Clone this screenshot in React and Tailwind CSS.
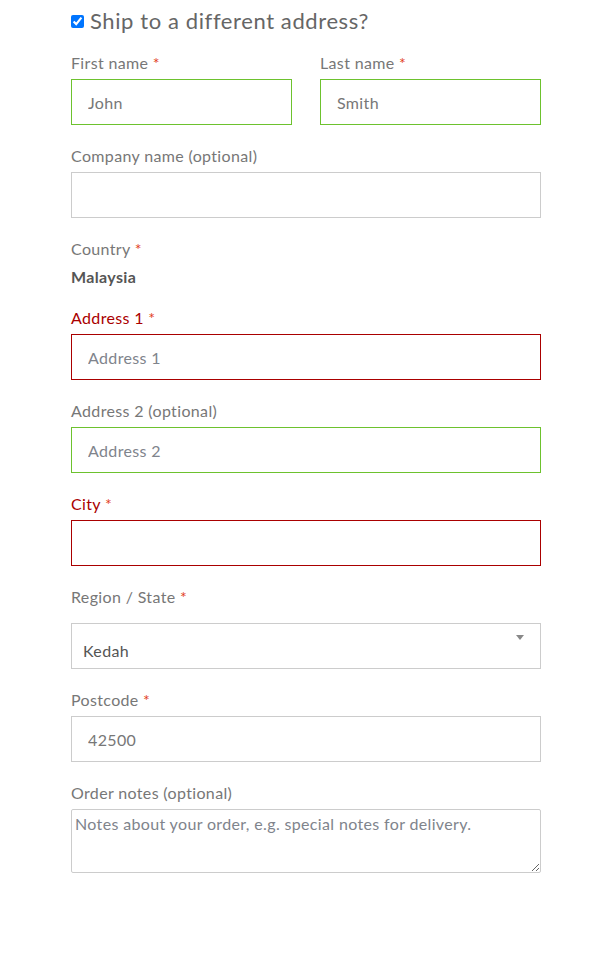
import { useState } from "react";

const font = { fontFamily: "Lato, 'Noto Sans', sans-serif" };

function Label({ text, required, invalid }) {
  return (
    <label
      className={`block text-[16px] leading-[24px] mb-[4px] tracking-[0.35px] ${
        invalid ? "text-[#a00]" : "text-[#777]"
      }`}
    >
      {text}
      {required && <span className="text-[#e2401c]"> *</span>}
    </label>
  );
}

function Field({ label, required, state, value, placeholder, className = "" }) {
  const border =
    state === "valid"
      ? "border-[#6dc22e]"
      : state === "invalid"
      ? "border-[#a00]"
      : "border-[#ccc]";
  return (
    <div className={`mb-[19px] ${className}`}>
      <Label text={label} required={required} invalid={state === "invalid"} />
      <input
        type="text"
        defaultValue={value}
        placeholder={placeholder}
        className={`block w-full h-[46px] border ${border} px-[16px] text-[16px] tracking-[0.35px] text-[#777] placeholder:text-[#80848c] outline-none`}
        style={font}
      />
    </div>
  );
}

export default function App() {
  const [ship, setShip] = useState(true);

  return (
    <div className="min-h-screen bg-white" style={font}>
      <div className="w-[470px] ml-[71px] pt-[5px]">
        {/* HEADING */}
        <div className="flex items-center gap-[6px] mb-[14px]">
          <input
            type="checkbox"
            checked={ship}
            onChange={(e) => setShip(e.target.checked)}
            className="w-[13px] h-[13px] m-0 accent-[#0075ff]"
          />
          <h3 className="text-[22px] leading-[32px] tracking-[0.6px] text-[#666]">
            Ship to a different address?
          </h3>
        </div>

        {/* NAME ROW */}
        <div className="grid grid-cols-2 gap-[28px]">
          <Field label="First name" required state="valid" value="John" />
          <Field label="Last name" required state="valid" value="Smith" />
        </div>

        <Field label="Company name (optional)" />

        {/* COUNTRY */}
        <div className="mb-[17px]">
          <div className="text-[16px] leading-[24px] tracking-[0.35px] text-[#777]">
            Country <span className="text-[#e2401c]">*</span>
          </div>
          <div className="text-[16px] leading-[24px] mt-[4px] font-bold tracking-[0.35px] text-[#555]">
            Malaysia
          </div>
        </div>

        <Field label="Address 1" required state="invalid" placeholder="Address 1" />
        <Field label="Address 2 (optional)" state="valid" placeholder="Address 2" />
        <Field label="City" required state="invalid" />

        {/* REGION */}
        <div className="mb-[19px]">
          <div className="mb-[14px]">
            <Label text="Region / State" required />
          </div>
          <div className="relative h-[46px] border border-[#ccc] px-[11px] flex items-end pb-[5px]">
            <span className="text-[16px] leading-[24px] tracking-[0.35px] text-[#555]">Kedah</span>
            <span className="absolute right-[16px] top-[11px] w-0 h-0 border-l-[4px] border-r-[4px] border-t-[5px] border-l-transparent border-r-transparent border-t-[#888]" />
          </div>
        </div>

        <Field label="Postcode" required value="42500" />

        {/* ORDER NOTES */}
        <div>
          <Label text="Order notes (optional)" />
          <textarea
            placeholder="Notes about your order, e.g. special notes for delivery."
            className="block w-full h-[64px] border border-[#ccc] rounded-[2px] px-[3px] py-[3px] text-[16px] leading-[22px] tracking-[0.35px] text-[#777] placeholder:text-[#80848c] outline-none"
            style={font}
          />
        </div>
      </div>
    </div>
  );
}
